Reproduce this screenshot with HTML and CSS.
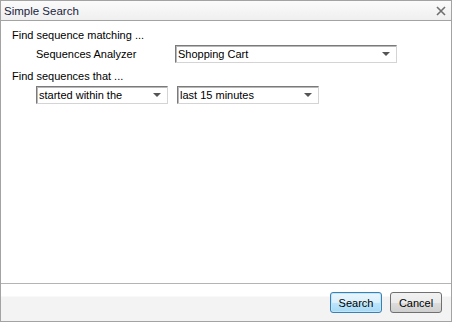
FILE: index.html
```html
<!DOCTYPE html>
<html lang="en">
<head>
    <meta charset="UTF-8">
    <title>Simple Search</title>
    <link rel="stylesheet" href="styles.css">
</head>
<body>

<div class="dialog">
    <div class="title_bar">
        <span class="title">Simple Search</span>
        <svg class="close" width="10" height="10" viewBox="0 0 10 10">
            <path d="M1 1 L9 9 M9 1 L1 9" stroke="#6f6f6f" stroke-width="1.6" fill="none"/>
        </svg>
    </div>

    <div class="content">
        <div class="caption">Find sequence matching ...</div>
        <div class="row row_first">
            <span class="field_label">Sequences Analyzer</span>
            <div class="combo combo_wide">
                <span>Shopping Cart</span>
                <span class="arrow"></span>
            </div>
        </div>

        <div class="caption">Find sequences that ...</div>
        <div class="row row_second">
            <div class="combo combo_mode">
                <span>started within the</span>
                <span class="arrow"></span>
            </div>
            <div class="combo combo_range">
                <span>last 15 minutes</span>
                <span class="arrow"></span>
            </div>
        </div>
    </div>

    <div class="footer">
        <div class="buttons">
            <div class="button button_default">Search</div>
            <div class="button">Cancel</div>
        </div>
    </div>
</div>

</body>
</html>
```

FILE: styles.css
```css
body {
    margin: 0;
    font-family: "Liberation Sans", Arial, sans-serif;
    font-size: 11px;
    color: #000;
}

.dialog {
    box-sizing: border-box;
    width: 452px;
    height: 322px;
    border: 1px solid #a3a3a3;
    background: #fff;
    display: flex;
    flex-direction: column;
}

.title_bar {
    height: 19px;
    border-bottom: 1px solid #a3a3a3;
    background: linear-gradient(#fbfbfb, #efefef);
    display: flex;
    align-items: center;
    justify-content: space-between;
    padding: 0 5px 0 3px;
}

.title {
    color: #1b2440;
    font-size: 11.5px;
    padding-top: 1px;
}

.content {
    flex: 1;
    padding: 7px 11px 0;
}

.caption {
    height: 14px;
    line-height: 14px;
}

.row {
    display: flex;
    align-items: center;
}

.row_first {
    margin-top: 3px;
    margin-bottom: 6px;
}

.row_second {
    margin-top: 3px;
    padding-left: 24px;
    gap: 9px;
}

.field_label {
    width: 139px;
    padding-left: 24px;
}

.combo {
    box-sizing: border-box;
    height: 18px;
    border: 1px solid;
    border-color: #7a7a7a #d4d4d4 #d4d4d4 #7a7a7a;
    box-shadow: inset 1px 1px 0 #b8b8b8;
    display: flex;
    align-items: center;
    justify-content: space-between;
    padding: 0 6px 0 2px;
    background: #fff;
}

.combo_wide {
    width: 222px;
}

.combo_mode {
    width: 132px;
}

.combo_range {
    width: 142px;
}

.arrow {
    width: 0;
    height: 0;
    border-left: 4px solid transparent;
    border-right: 4px solid transparent;
    border-top: 4px solid #555;
}

.footer {
    height: 37px;
    border-top: 1px solid #b4b4b4;
    background: linear-gradient(#fff 0, #fff 12px, #f3f3f3 13px, #f3f3f3 100%);
    display: flex;
    align-items: flex-start;
    justify-content: flex-end;
}

.buttons {
    display: flex;
    gap: 8px;
    padding: 8px 9px 0 0;
}

.button {
    box-sizing: border-box;
    width: 52px;
    height: 21px;
    border: 1px solid #707070;
    border-radius: 3px;
    background: linear-gradient(#f2f2f2 0, #ebebeb 50%, #dddddd 51%, #cfcfcf 100%);
    display: flex;
    align-items: center;
    justify-content: center;
}

.button_default {
    border-color: #3c7fb1;
    box-shadow: inset 0 0 0 1px #bfe6f9;
    background: linear-gradient(#eaf6fd 0, #d9f0fc 50%, #bee6fd 51%, #a7d9f5 100%);
}
```
